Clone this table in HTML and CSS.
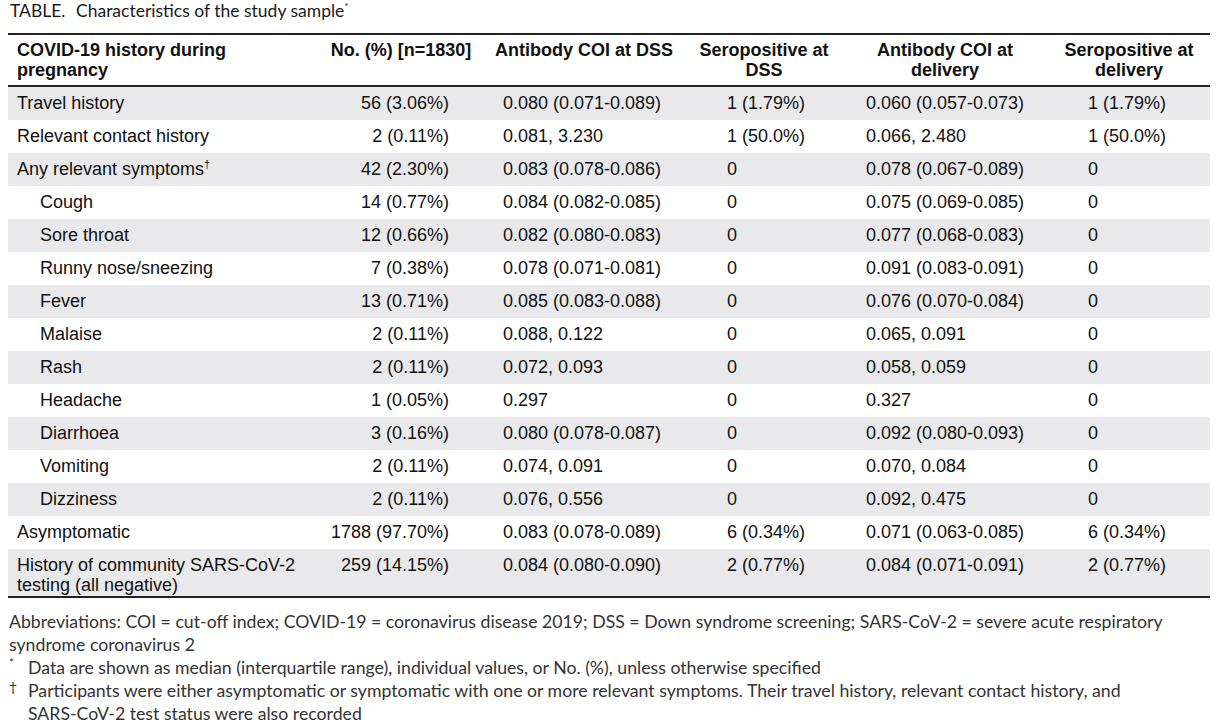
FILE: index.html
```html
<!DOCTYPE html>
<html lang="en">
<head>
<meta charset="utf-8">
<title>TABLE. Characteristics of the study sample</title>
<link rel="stylesheet" href="styles.css">
</head>
<body>
<div class="page">
  <p class="caption"><span class="label">TABLE.</span> Characteristics of the study sample<sup class="cap-sup">*</sup></p>
  <table class="data">
    <colgroup>
      <col class="c1"><col class="c2"><col class="c3"><col class="c4"><col class="c5"><col class="c6">
    </colgroup>
    <thead>
      <tr>
        <th class="first">COVID-19 history during<br>pregnancy</th>
        <th>No. (%) [n=1830]</th>
        <th>Antibody COI at DSS</th>
        <th>Seropositive at<br>DSS</th>
        <th>Antibody COI at<br>delivery</th>
        <th>Seropositive at<br>delivery</th>
      </tr>
    </thead>
    <tbody>
      <tr><td class="name">Travel history</td><td class="n">56 (3.06%)</td><td class="a">0.080 (0.071-0.089)</td><td class="s">1 (1.79%)</td><td class="b">0.060 (0.057-0.073)</td><td class="t">1 (1.79%)</td></tr>
      <tr><td class="name">Relevant contact history</td><td class="n">2 (0.11%)</td><td class="a">0.081, 3.230</td><td class="s">1 (50.0%)</td><td class="b">0.066, 2.480</td><td class="t">1 (50.0%)</td></tr>
      <tr><td class="name">Any relevant symptoms<sup class="dag">†</sup></td><td class="n">42 (2.30%)</td><td class="a">0.083 (0.078-0.086)</td><td class="s">0</td><td class="b">0.078 (0.067-0.089)</td><td class="t">0</td></tr>
      <tr><td class="name sub">Cough</td><td class="n">14 (0.77%)</td><td class="a">0.084 (0.082-0.085)</td><td class="s">0</td><td class="b">0.075 (0.069-0.085)</td><td class="t">0</td></tr>
      <tr><td class="name sub">Sore throat</td><td class="n">12 (0.66%)</td><td class="a">0.082 (0.080-0.083)</td><td class="s">0</td><td class="b">0.077 (0.068-0.083)</td><td class="t">0</td></tr>
      <tr><td class="name sub">Runny nose/sneezing</td><td class="n">7 (0.38%)</td><td class="a">0.078 (0.071-0.081)</td><td class="s">0</td><td class="b">0.091 (0.083-0.091)</td><td class="t">0</td></tr>
      <tr><td class="name sub">Fever</td><td class="n">13 (0.71%)</td><td class="a">0.085 (0.083-0.088)</td><td class="s">0</td><td class="b">0.076 (0.070-0.084)</td><td class="t">0</td></tr>
      <tr><td class="name sub">Malaise</td><td class="n">2 (0.11%)</td><td class="a">0.088, 0.122</td><td class="s">0</td><td class="b">0.065, 0.091</td><td class="t">0</td></tr>
      <tr><td class="name sub">Rash</td><td class="n">2 (0.11%)</td><td class="a">0.072, 0.093</td><td class="s">0</td><td class="b">0.058, 0.059</td><td class="t">0</td></tr>
      <tr><td class="name sub">Headache</td><td class="n">1 (0.05%)</td><td class="a">0.297</td><td class="s">0</td><td class="b">0.327</td><td class="t">0</td></tr>
      <tr><td class="name sub">Diarrhoea</td><td class="n">3 (0.16%)</td><td class="a">0.080 (0.078-0.087)</td><td class="s">0</td><td class="b">0.092 (0.080-0.093)</td><td class="t">0</td></tr>
      <tr><td class="name sub">Vomiting</td><td class="n">2 (0.11%)</td><td class="a">0.074, 0.091</td><td class="s">0</td><td class="b">0.070, 0.084</td><td class="t">0</td></tr>
      <tr><td class="name sub">Dizziness</td><td class="n">2 (0.11%)</td><td class="a">0.076, 0.556</td><td class="s">0</td><td class="b">0.092, 0.475</td><td class="t">0</td></tr>
      <tr><td class="name">Asymptomatic</td><td class="n">1788 (97.70%)</td><td class="a">0.083 (0.078-0.089)</td><td class="s">6 (0.34%)</td><td class="b">0.071 (0.063-0.085)</td><td class="t">6 (0.34%)</td></tr>
      <tr class="last"><td class="name">History of community SARS-CoV-2<br>testing (all negative)</td><td class="n">259 (14.15%)</td><td class="a">0.084 (0.080-0.090)</td><td class="s">2 (0.77%)</td><td class="b">0.084 (0.071-0.091)</td><td class="t">2 (0.77%)</td></tr>
    </tbody>
  </table>
  <div class="notes">
    <p class="abbr">Abbreviations: COI = cut-off index; COVID-19 = coronavirus disease 2019; DSS = Down syndrome screening; SARS-CoV-2 = severe acute respiratory syndrome coronavirus 2</p>
    <div class="fn"><span class="mark star">*</span><span class="fn-text">Data are shown as median (interquartile range), individual values, or No. (%), unless otherwise specified</span></div>
    <div class="fn"><span class="mark dagger">†</span><span class="fn-text">Participants were either asymptomatic or symptomatic with one or more relevant symptoms. Their travel history, relevant contact history, and <span class="nw">SARS-CoV-2</span> test status were also recorded</span></div>
  </div>
</div>
</body>
</html>
```

FILE: styles.css
```css
html, body {
  margin: 0;
  padding: 0;
  background: #ffffff;
}

.page {
  padding: 0 8px;
  width: 1202px;
}

.caption {
  margin: 0;
  height: 33px;
  box-sizing: border-box;
  padding: 0 0 0 2px;
  font-family: Lato, "Open Sans", sans-serif;
  font-size: 17.5px;
  line-height: 22px;
  color: #1a1a1a;
}

.caption .label {
  margin-right: 6px;
}

.cap-sup {
  font-size: 10px;
  vertical-align: 7px;
  line-height: 0;
}

.data {
  width: 1202px;
  border-collapse: collapse;
  table-layout: fixed;
  font-family: "Liberation Sans", Arial, sans-serif;
  font-size: 18px;
  line-height: 20px;
  color: #111111;
}

.c1 { width: 312px; }
.c2 { width: 162px; }
.c3 { width: 204px; }
.c4 { width: 156px; }
.c5 { width: 206px; }
.c6 { width: 162px; }

.data thead tr {
  border-top: 2px solid #222222;
  border-bottom: 2px solid #222222;
}

.data th {
  padding: 5px 2px 5px;
  font-weight: bold;
  text-align: center;
  vertical-align: top;
  white-space: nowrap;
}

.data th.first {
  text-align: left;
  padding-left: 9px;
}

.data td {
  padding: 6px 0 7px;
  vertical-align: top;
  white-space: nowrap;
}

.data tbody tr:nth-child(odd) {
  background: #e9e9eb;
}

.data tbody tr.last {
  border-bottom: 2px solid #222222;
}

.data tbody tr.last td {
  padding-bottom: 1px;
}

.data td.name { padding-left: 9px; }
.data td.name.sub { padding-left: 32px; }
.data td.n { text-align: right; padding-right: 33px; }
.data td.a { padding-left: 21px; }
.data td.s { padding-left: 41px; }
.data td.b { padding-left: 24px; }
.data td.t { padding-left: 40px; }

.dag {
  font-size: 11px;
  vertical-align: 7px;
  line-height: 0;
}

.notes {
  padding-top: 12px;
  width: 1182px;
  font-family: Lato, "Open Sans", sans-serif;
  font-size: 17.7px;
  line-height: 23px;
  color: #333333;
}

.nw {
  white-space: nowrap;
}

.abbr {
  margin: 0;
  padding-left: 1px;
}

.fn {
  display: flex;
  padding-left: 1px;
}

.mark {
  flex: 0 0 19px;
  position: relative;
}

.mark.star {
  font-size: 12px;
  top: -5px;
}

.mark.dagger {
  font-size: 14px;
  top: -4px;
}

.fn-text {
  flex: 1;
}
```
